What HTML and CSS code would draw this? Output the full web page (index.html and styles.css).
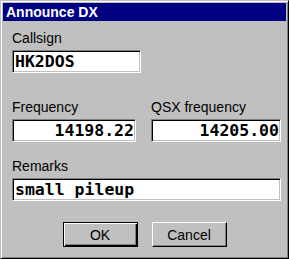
FILE: index.html
```html
<!DOCTYPE html>
<html lang="en">
<head>
  <meta charset="UTF-8">
  <title>Announce DX</title>
  <link rel="stylesheet" href="styles.css">
</head>
<body>
  <div class="window">
    <div class="titlebar">Announce DX</div>

    <div class="content">
      <!-- Callsign -->
      <div class="field">
        <label>Callsign</label>
        <div class="box callsign">HK2DOS</div>
      </div>

      <!-- Frequencies -->
      <div class="freq-row">
        <div class="field">
          <label>Frequency</label>
          <div class="box freq num">14198.22</div>
        </div>
        <div class="field">
          <label>QSX frequency</label>
          <div class="box qsx num">14205.00</div>
        </div>
      </div>

      <!-- Remarks -->
      <div class="field remarks-field">
        <label>Remarks</label>
        <div class="box remarks">small pileup</div>
      </div>
    </div>

    <div class="buttons">
      <button class="btn default">OK</button>
      <button class="btn">Cancel</button>
    </div>
  </div>
</body>
</html>
```

FILE: styles.css
```css
* { box-sizing: border-box; }

body {
  margin: 0;
  padding: 0;
  background: #c0c0c0;
  font-family: 'Liberation Sans', Arial, sans-serif;
}

.window {
  width: 289px;
  height: 259px;
  background: #c0c0c0;
  border: 1px solid;
  border-color: #c0c0c0 #000 #000 #c0c0c0;
  box-shadow: inset 1px 1px #fff, inset -1px -1px #808080;
  padding: 2px;
}

.titlebar {
  height: 18px;
  background: #000080;
  color: #fff;
  font-weight: bold;
  font-size: 14px;
  line-height: 17px;
  padding: 1px 0 0 3px;
}

.content {
  padding: 9px 5px 0 9px;
}

label {
  display: block;
  font-size: 14px;
  line-height: 16px;
  color: #000;
  margin-bottom: 4px;
}

.box {
  height: 23px;
  background: #fff;
  border: 1px solid;
  border-color: #808080 #fff #fff #808080;
  box-shadow: inset 1px 1px #000, inset -1px -1px #c0c0c0;
  font-family: 'DejaVu Sans Mono', 'Liberation Mono', monospace;
  font-weight: bold;
  font-size: 16.5px;
  line-height: 21px;
  padding: 0 1px 0 2px;
  white-space: nowrap;
  overflow: hidden;
}

.num {
  text-align: right;
}

.callsign { width: 129px; }

.freq-row {
  display: flex;
  gap: 15px;
  margin-top: 26px;
}

.freq { width: 124px; }
.qsx { width: 130px; }

.remarks-field {
  margin-top: 16px;
}

.remarks { width: 269px; }

.buttons {
  display: flex;
  justify-content: center;
  gap: 14px;
  margin-top: 21px;
}

.btn {
  width: 75px;
  height: 25px;
  padding: 0;
  margin: 0;
  background: #c0c0c0;
  font-family: 'Liberation Sans', Arial, sans-serif;
  font-size: 14px;
  color: #000;
  border: 1px solid;
  border-color: #fff #000 #000 #fff;
  box-shadow: inset -1px -1px #808080;
  border-radius: 0;
}

.btn.default {
  border-color: #000;
  box-shadow: inset 1px 1px #fff, inset -1px -1px #000, inset -2px -2px #808080;
}
```
